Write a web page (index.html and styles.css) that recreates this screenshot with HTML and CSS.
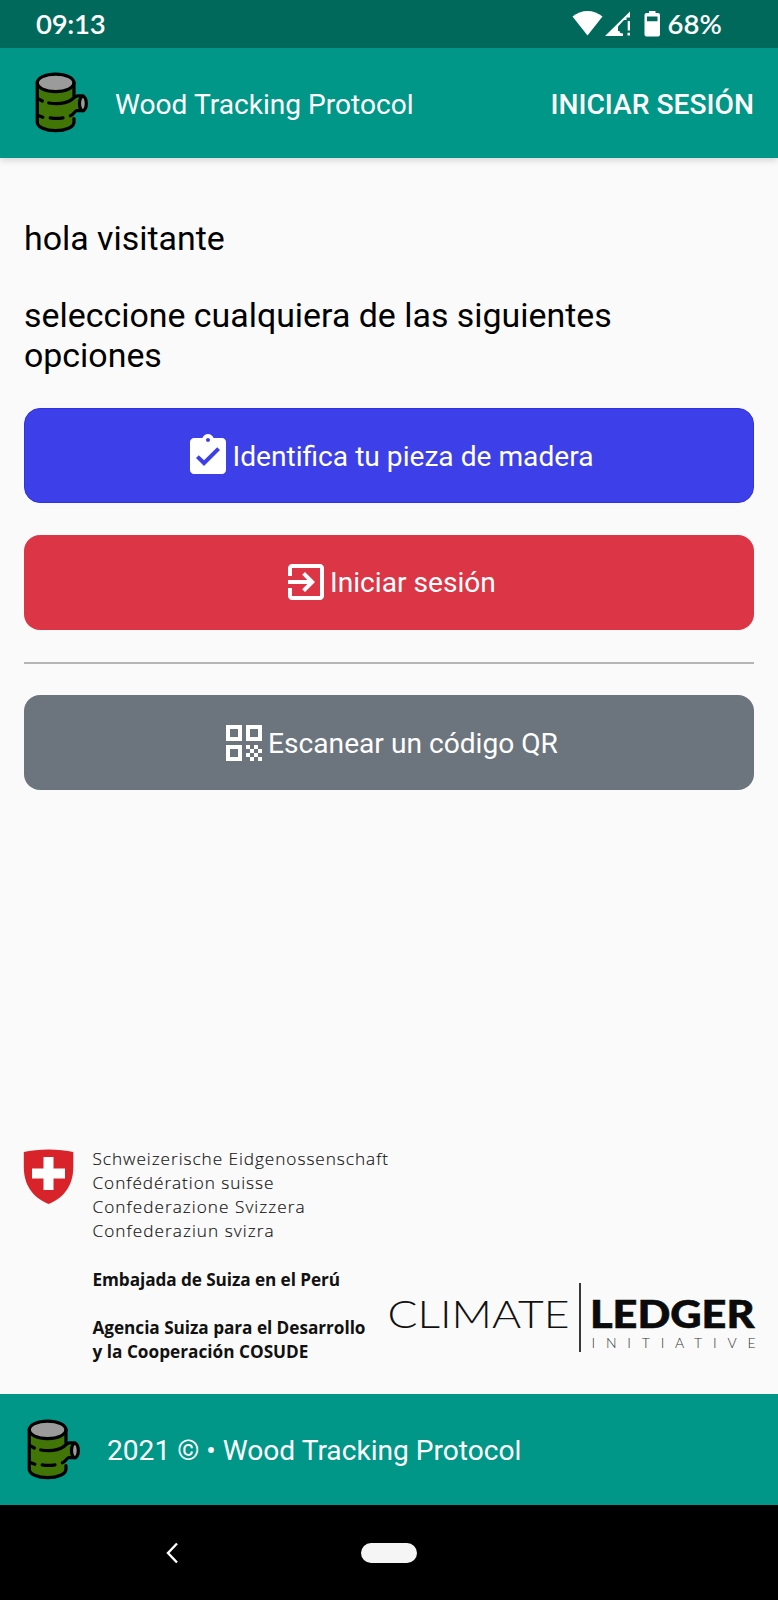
FILE: index.html
```html
<!DOCTYPE html>
<html lang="es">
<head>
<meta charset="utf-8">
<title>Wood Tracking Protocol</title>
<link rel="stylesheet" href="styles.css">
</head>
<body>
<svg class="defs" width="0" height="0" aria-hidden="true">
  <symbol id="log" viewBox="0 0 54 62">
    <path d="M2.500 10v41c0 5 8 9 18.500 9s18.500-4 18.500-9v-7l5-6h5V27h-11V10z" fill="#417505"/>
    <ellipse cx="21" cy="11" rx="18.500" ry="8.700" fill="#9b9b9b"/>
    <ellipse cx="49" cy="32" rx="3" ry="6" fill="#9b9b9b"/>
    <g fill="none" stroke="#000" stroke-width="3.300" stroke-linecap="round">
      <ellipse cx="21" cy="11" rx="18.700" ry="9"/>
      <path d="M2.300 11v40c0 4.900 8.400 8.600 18.700 8.600S39.700 56 39.700 51v-3.500M39.700 11v13"/>
      <path d="M14 31.500c9 1.300 18 .2 23-3.200 3.200-2.200 4-4 6.500-4h5.500M49 39.300h-6.500c-1.700 0-3.700 4.700-6.500 5.200M4 27.500l3.500 2M4 44.500l4 1.500M15.500 46.700c4 .7 9 .7 13 0"/>
      <ellipse cx="48.800" cy="32" rx="3.500" ry="7.300"/>
    </g>
  </symbol>
</svg>
<div class="screen">
  <div class="status">
    <span class="clock">09:13</span>
    <svg class="status-icons" viewBox="0 0 90 28">
      <g fill="#fff">
        <path d="M0.500 6.500C9-1 22-1 30.500 6.500L15.500 25.500z"/>
        <path d="M58 1.500v6h-3.500v2.500H52L46 16.500v7l2 2.500H33z"/>
        <path d="M46 21h1.500q0 2.500 3.500 2.500v2.500H46z"/>
        <path d="M55.700 11h2.300v9.500h-2.300zM55.500 22.800h2.500v2.800h-2.500z"/>
        <path fill-rule="evenodd" d="M77 1h6.500v2H86q2 0 2 2v19.500q0 2-2 2H74.500q-2 0-2-2V5q0-2 2-2H77zM75 6.500v4.700h10.500V6.500z"/>
      </g>
    </svg>
    <span class="battery">68%</span>
  </div>
  <header class="appbar">
    <svg class="logo"><use href="#log"/></svg>
    <span class="brand">Wood Tracking Protocol</span>
    <a class="login">INICIAR SESIÓN</a>
  </header>
  <main class="content">
    <p class="greeting">hola visitante</p>
    <p class="prompt">seleccione cualquiera de las siguientes opciones</p>
    <div class="actions">
      <div class="btn btn-blue">
        <svg class="icon" viewBox="0 0 24 24"><path d="M19 3h-4.180C14.400 1.840 13.300 1 12 1c-1.300 0-2.400.84-2.820 2H5c-1.100 0-2 .9-2 2v14c0 1.100.9 2 2 2h14c1.100 0 2-.9 2-2V5c0-1.100-.9-2-2-2zm-7 0c.55 0 1 .45 1 1s-.45 1-1 1-1-.45-1-1 .45-1 1-1zm-2 14l-4-4 1.410-1.410L10 14.170l6.590-6.590L18 9l-8 8z"/></svg>
        <span class="label">Identifica tu pieza de madera</span>
      </div>
      <div class="btn btn-red">
        <svg class="icon" viewBox="0 0 24 24"><path d="M10.090 15.590L11.500 17l5-5-5-5-1.410 1.410L12.670 11H3v2h9.670l-2.580 2.590zM19 3H5c-1.110 0-2 .9-2 2v4h2V5h14v14H5v-4H3v4c0 1.100.89 2 2 2h14c1.100 0 2-.9 2-2V5c0-1.100-.9-2-2-2z"/></svg>
        <span class="label">Iniciar sesión</span>
      </div>
      <div class="rule"></div>
      <div class="btn btn-gray">
        <svg class="icon" viewBox="0 0 24 24"><path d="M3 11h8V3H3v8zm2-6h4v4H5V5zM3 21h8v-8H3v8zm2-6h4v4H5v-4zM13 3v8h8V3h-8zm6 6h-4V5h4v4zM19 19h2v2h-2zM13 13h2v2h-2zM15 15h2v2h-2zM13 17h2v2h-2zM15 19h2v2h-2zM17 17h2v2h-2zM17 13h2v2h-2zM19 15h2v2h-2z"/></svg>
        <span class="label">Escanear un código QR</span>
      </div>
    </div>
    <div class="partners">
      <svg class="swiss" viewBox="0 0 366 225">
        <path d="M.8 7C14 3.500 37 3.500 50.300 7V22C50.300 43 38 54 25.600 59 13 54 .8 43 .8 22z" fill="#d8232a"/>
        <path d="M20.500 12h10v11.500H42v10H30.500v11.500h-10V33.500H9V23.500h11.500z" fill="#fff"/>
        <g class="swiss-light">
          <text x="69.500" y="20.200" textLength="295.500">Schweizerische Eidgenossenschaft</text>
          <text x="69.500" y="44.300" textLength="181">Confédération suisse</text>
          <text x="69.500" y="68.300" textLength="212">Confederazione Svizzera</text>
          <text x="69.500" y="92.300" textLength="181">Confederaziun svizra</text>
        </g>
        <g class="swiss-bold">
          <text x="69.500" y="141" textLength="247.500">Embajada de Suiza en el Perú</text>
          <text x="69.500" y="189" textLength="273">Agencia Suiza para el Desarrollo</text>
          <text x="69.500" y="213" textLength="216">y la Cooperación COSUDE</text>
        </g>
      </svg>
      <svg class="climate" viewBox="0 0 368 75">
        <text class="cli-thin" x="-.5" y="48.300" textLength="182" lengthAdjust="spacingAndGlyphs">CLIMATE</text>
        <path d="M192 3v69" stroke="#222" stroke-width="1.800"/>
        <text class="cli-black" x="202" y="48.300" textLength="164.500" lengthAdjust="spacingAndGlyphs">LEDGER</text>
        <text class="cli-small" x="203.500" y="67.700" textLength="164">INITIATIVE</text>
      </svg>
    </div>
  </main>
  <footer class="footer">
    <svg class="logo"><use href="#log"/></svg>
    <span class="brand">2021 © • Wood Tracking Protocol</span>
  </footer>
  <nav class="navbar">
    <svg class="back" viewBox="0 0 14 22"><path d="M12 1.500L3 11l9 9.500" fill="none" stroke="#fff" stroke-width="2.400"/></svg>
    <span class="pill"></span>
  </nav>
</div>
</body>
</html>
```
FILE: styles.css
```css
* { box-sizing: border-box; }
body { margin: 0; background: #fafafa; font-family: Roboto, "Liberation Sans", sans-serif; }
.defs { display: block; }
.screen { width: 778px; height: 1600px; display: flex; flex-direction: column; background: #fafafa; overflow: hidden; }

.status { position: relative; z-index: 1; height: 47.500px; flex: none; display: flex; align-items: center; padding: 0 56px 0 36px; background: #00695c; color: #fff; font: 600 27.500px/47px Lato, sans-serif; }
.clock { letter-spacing: -.3px; }
.status-icons { width: 90px; height: 28px; margin-left: auto; margin-right: 5.500px; }
.battery { width: 54.500px; white-space: nowrap; }

.appbar { height: 110.500px; flex: none; display: flex; align-items: center; padding: 0 24px 0 34.500px; background: #009688; color: #fff; box-shadow: 0 2px 7px rgba(0, 0, 0, .16); }
.logo { width: 53px; height: 61px; flex: none; margin-right: 27.500px; }
.brand { padding-top: 4px; font-size: 28.130px; line-height: 34px; white-space: nowrap; }
.login { margin-left: auto; padding-top: 4px; font-size: 28.200px; font-weight: 500; line-height: 34px; white-space: nowrap; }

.content { flex: 1; display: flex; flex-direction: column; padding: 61px 24px 0; min-height: 0; }
.greeting, .prompt { margin: 0; font-size: 33.900px; line-height: 40px; color: #000; }
.prompt { margin-top: 37px; }
.actions { display: flex; flex-direction: column; gap: 31.800px; margin-top: 32px; }
.btn { height: 95px; border-radius: 16px; display: flex; align-items: center; justify-content: center; color: #fff; font-size: 28.150px; line-height: 34px; white-space: nowrap; }
.btn-blue { background: #3d40e8; border: 1px solid #2e31e4; }
.btn-red { background: #dc3545; }
.btn-gray { background: #6c757d; }
.label { padding-top: 2px; }
.rule { height: 2px; background: #b5b5b5; }
.icon { width: 48px; height: 48px; flex: none; fill: #fff; }

.partners { display: flex; align-items: flex-end; margin: auto -3px 24px -1px; }
.swiss { width: 366px; height: 225px; flex: none; overflow: visible; }
.climate { width: 368px; height: 75px; flex: none; margin: 0 0 15px -1px; overflow: visible; }
.swiss-light { font: 300 17.200px "Open Sans", sans-serif; fill: #111; stroke: #111; stroke-width: .15px; }
.swiss-bold { font: 700 17.200px "Open Sans", sans-serif; fill: #111; }
.cli-thin { font: 300 38px Lato, sans-serif; fill: #111; }
.cli-black { font: 900 38px Lato, sans-serif; fill: #0b0b0b; stroke: #0b0b0b; stroke-width: .6px; }
.cli-small { font: 300 14px Lato, sans-serif; fill: #333; }

.footer { height: 110.500px; flex: none; display: flex; align-items: center; padding-left: 26.500px; background: #009688; color: #fff; }
.navbar { height: 95.500px; flex: none; display: grid; grid-template-columns: 1fr 56px 1fr; align-items: center; padding-top: 1px; background: #000; }
.back { width: 14px; height: 22px; margin-left: 165px; }
.pill { height: 20px; border-radius: 10px; background: #f5f5f5; }
```
